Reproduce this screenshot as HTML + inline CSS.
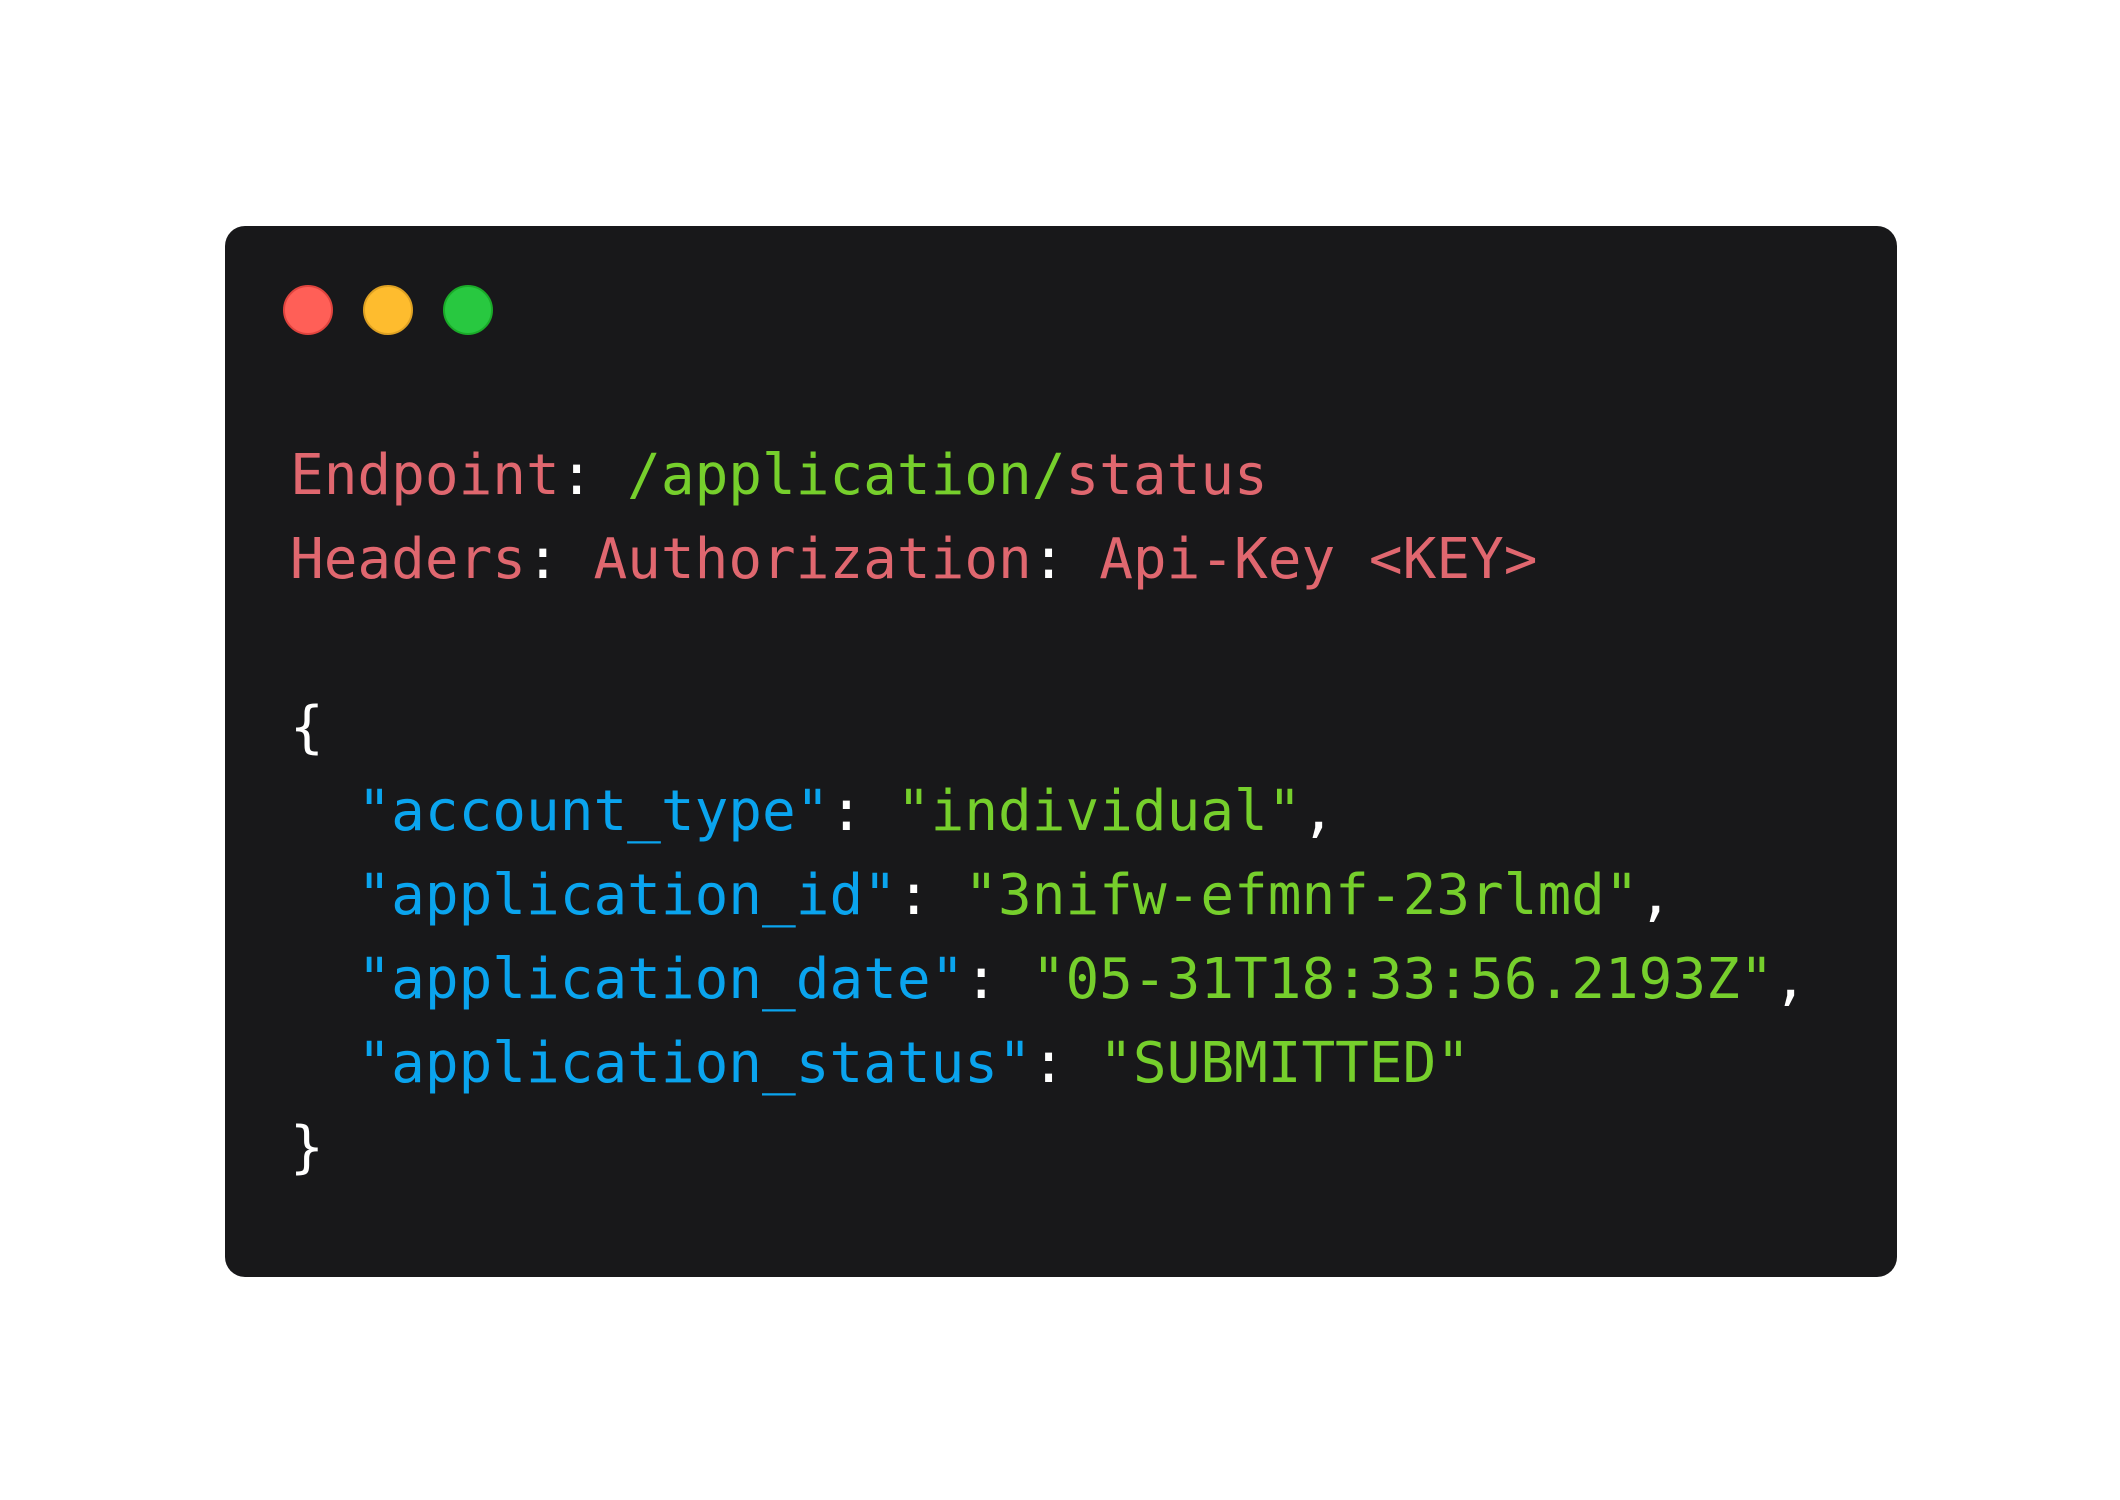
<!DOCTYPE html>
<html><head><meta charset="utf-8"><style>
html,body{margin:0;padding:0;background:#fff;width:2120px;height:1500px;overflow:hidden}
.card{position:absolute;left:225px;top:226px;width:1672px;height:1051px;background:#18181a;border-radius:20px}
.dot{position:absolute;top:285px;width:50px;height:50px;border-radius:50%;box-sizing:border-box}
pre{position:absolute;left:290px;top:434px;margin:0;font-family:"DejaVu Sans Mono","Liberation Mono",monospace;font-size:56px;line-height:84px;color:#fff}
.r{color:#e0676f}.g{color:#76cf2c}.b{color:#0aa4ee}.w{color:#fff}
</style></head><body>
<div class="card"></div>
<div class="dot" style="left:283px;background:#ff5f57;border:2px solid #e0443e"></div>
<div class="dot" style="left:363px;background:#febc2e;border:2px solid #dea123"></div>
<div class="dot" style="left:443px;background:#28c840;border:2px solid #1aab29"></div>
<pre><span class="r">Endpoint</span>: <span class="g">/application/</span><span class="r">status</span>
<span class="r">Headers</span>: <span class="r">Authorization</span>: <span class="r">Api-Key &lt;KEY&gt;</span>

{
  <span class="b">"account_type"</span>: <span class="g">"individual"</span>,
  <span class="b">"application_id"</span>: <span class="g">"3nifw-efmnf-23rlmd"</span>,
  <span class="b">"application_date"</span>: <span class="g">"05-31T18:33:56.2193Z"</span>,
  <span class="b">"application_status"</span>: <span class="g">"SUBMITTED"</span>
}</pre>
</body></html>
